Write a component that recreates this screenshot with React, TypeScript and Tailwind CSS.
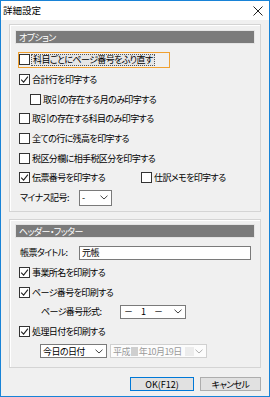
import React from 'react';

const Check = ({ on }: { on?: boolean }) => (
  <span className="w-[11px] h-[11px] border border-[#333] bg-white flex items-center justify-center shrink-0">
    {on && (
      <svg width="9" height="9" viewBox="0 0 9 9">
        <path d="M1.2 4.6 L3.6 7.1 L7.9 1.6" fill="none" stroke="#222" strokeWidth="1.1" />
      </svg>
    )}
  </span>
);

const Chevron = ({ gray }: { gray?: boolean }) => (
  <svg width="8" height="5" viewBox="0 0 8 5" className="shrink-0">
    <path d="M0.5 0.7 L4 4 L7.5 0.7" fill="none" stroke={gray ? '#b0b0b0' : '#444'} strokeWidth="1" />
  </svg>
);

const CheckRow = ({ label, on, indent, focus }: { label: string; on?: boolean; indent?: boolean; focus?: boolean }) => (
  <div className={`h-[19.7px] flex items-center ${indent ? 'pl-[19px]' : 'pl-[8px]'}`}>
    <div className={`flex items-center gap-[1px] h-[16px] pr-[14px] border ${focus ? 'border-[#f0a030]' : 'border-transparent'}`}>
      <Check on={on} />
      <span className={`px-[1px] h-[12px] flex items-center whitespace-nowrap ${focus ? 'border border-dotted border-[#555] bg-[#e6e6e6]' : ''}`}>{label}</span>
    </div>
  </div>
);

const Bar = ({ title }: { title: string }) => (
  <div className="h-[14px] bg-[#7b7b7b] border border-[#e4e4e4] text-white flex items-center pl-[3px]">{title}</div>
);

export default function App() {
  return (
    <div className="w-[270px] h-[397px] border border-[#1883d7] bg-[#f0f0f0] flex flex-col text-[9px] leading-none tracking-[-0.6px] text-black font-['Noto_Sans_CJK_JP',sans-serif] [font-feature-settings:'palt'] whitespace-nowrap">
      {/* title bar */}
      <div className="h-[19px] bg-white flex items-center justify-between pl-[2px] pr-[6px] shrink-0 text-[9.5px] tracking-normal">
        <span>詳細設定</span>
        <svg width="10" height="10" viewBox="0 0 10 10">
          <path d="M0.5 0.5 L9.5 9.5 M9.5 0.5 L0.5 9.5" stroke="#222" strokeWidth="1" />
        </svg>
      </div>

      <div className="px-[8px] pt-[4px] flex flex-col">
        {/* オプション */}
        <div className="h-[188px] border border-[#d4d4d4] shadow-[inset_1px_1px_0_#fff] px-[5px] pt-[5px]">
          <Bar title="オプション" />
          <div className="mt-[6px] -mx-[5px]">
            <CheckRow label="科目ごとにページ番号をふり直す" focus />
            <CheckRow label="合計行を印字する" on />
            <CheckRow label="取引の存在する月のみ印字する" indent />
            <CheckRow label="取引の存在する科目のみ印字する" />
            <CheckRow label="全ての行に残高を印字する" />
            <CheckRow label="税区分欄に相手税区分を印字する" />
            <div className="h-[19.7px] flex items-center pl-[9px]">
              <div className="w-[122px] flex items-center gap-[2px]">
                <Check on />
                <span>伝票番号を印字する</span>
              </div>
              <div className="flex items-center gap-[2px]">
                <Check />
                <span>仕訳メモを印字する</span>
              </div>
            </div>
            <div className="h-[19.7px] flex items-center pl-[10px]">
              <span className="w-[59px]">マイナス記号:</span>
              <div className="w-[33px] h-[16px] bg-white border border-[#7a7a7a] flex items-center justify-between pl-[2px] pr-[3px]">
                <span>-</span>
                <Chevron />
              </div>
            </div>
          </div>
        </div>

        {/* ヘッダー・フッター */}
        <div className="mt-[7px] h-[149px] border border-[#d4d4d4] shadow-[inset_1px_1px_0_#fff] px-[5px] pt-[4px]">
          <Bar title="ヘッダー・フッター" />
          <div className="mt-[5px] -mx-[5px]">
            <div className="h-[19.7px] flex items-center pl-[10px]">
              <span className="w-[59px]">帳票タイトル:</span>
              <div className="w-[172px] h-[14px] bg-white border border-[#7a7a7a] flex items-center pl-[2px]">元帳</div>
            </div>
            <CheckRow label="事業所名を印刷する" on />
            <CheckRow label="ページ番号を印刷する" on />
            <div className="h-[19.7px] flex items-center pl-[31px]">
              <span className="w-[79px]">ページ番号形式:</span>
              <div className="w-[66px] h-[14px] bg-white border border-[#7a7a7a] flex items-center justify-between pl-[3px] pr-[3px]">
                <span className="tracking-[3px]">－ 1 －</span>
                <Chevron />
              </div>
            </div>
            <CheckRow label="処理日付を印刷する" on />
            <div className="h-[19.7px] flex items-center pl-[30px] gap-[3px]">
              <div className="w-[67px] h-[14px] bg-white border border-[#7a7a7a] flex items-center justify-between pl-[2px] pr-[3px]">
                <span>今日の日付</span>
                <Chevron />
              </div>
              <div className="w-[97px] h-[14px] bg-[#fcfcfc] border border-[#d0d0d0] text-[#9a9a9a] flex items-center justify-between pl-[2px] pr-[3px]">
                <span className="flex items-center">
                  平成<span className="inline-block w-[7px] h-[9px] bg-[#cfcfcf] mx-[1px]" />年10月19日
                  <span className="inline-block w-[9px] h-[9px] bg-[#ececec] ml-[3px]" />
                </span>
                <Chevron gray />
              </div>
            </div>
          </div>
        </div>

        {/* buttons */}
        <div className="mt-[9px] flex justify-end gap-[6px]">
          <button className="w-[64px] h-[14px] bg-[#e1e1e1] border border-[#0078d7] flex items-center justify-center text-[9px] tracking-normal">OK(F12)</button>
          <button className="w-[61px] h-[14px] bg-[#e1e1e1] border border-[#adadad] flex items-center justify-center text-[9px]">キャンセル</button>
        </div>
      </div>
    </div>
  );
}
